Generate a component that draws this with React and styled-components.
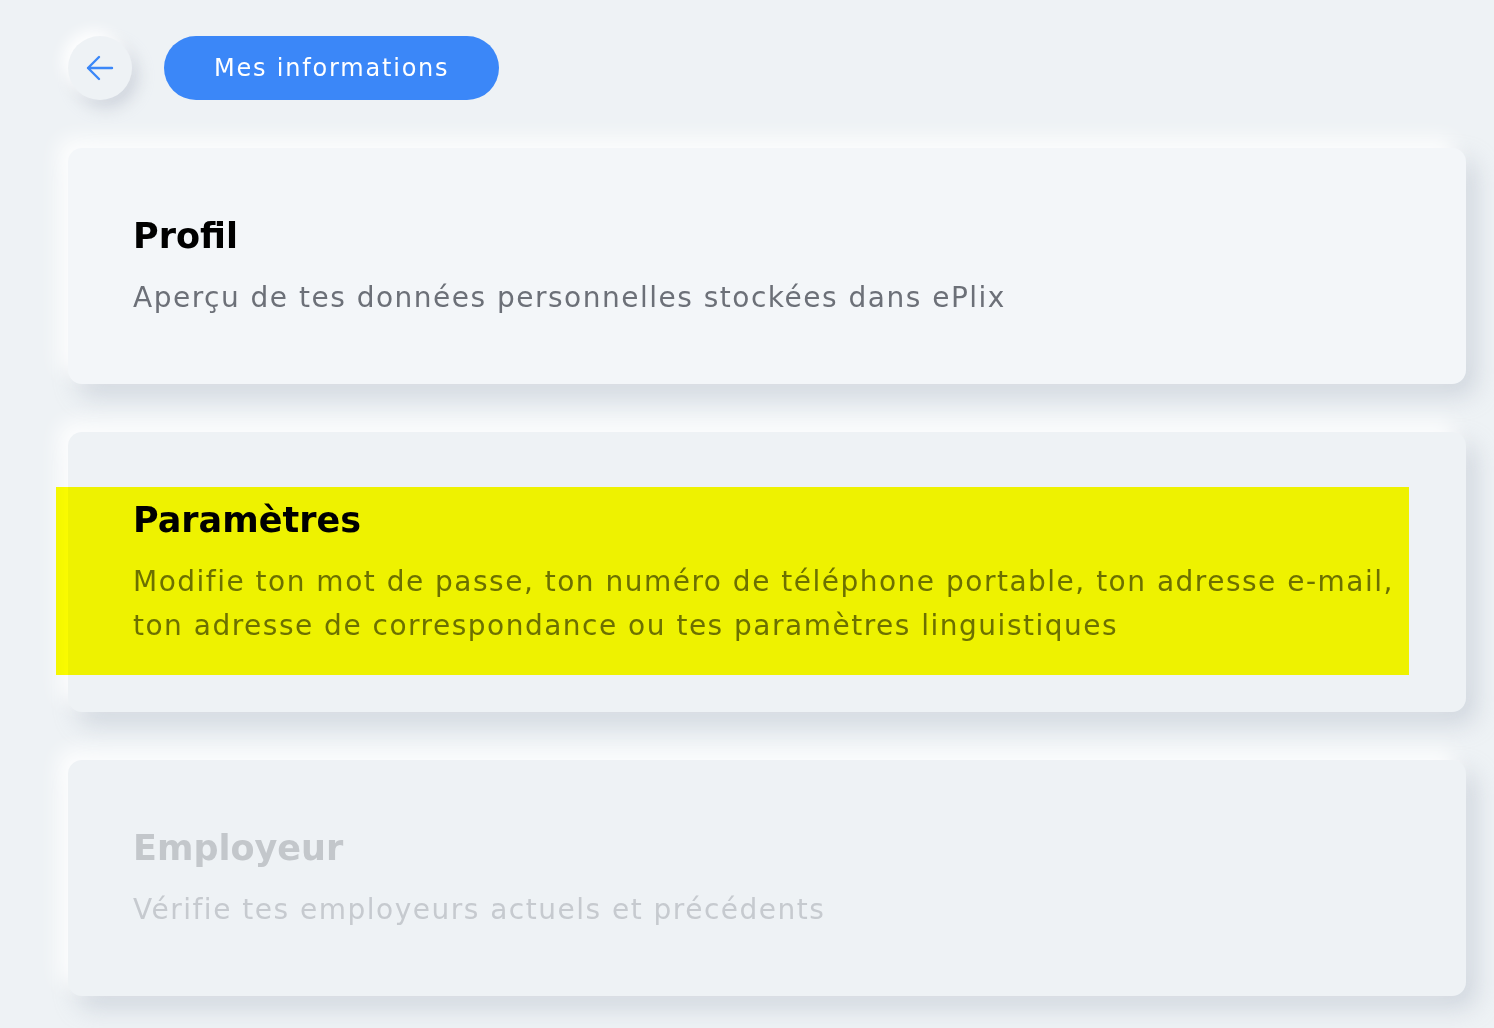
import React from 'react';
import styled, { createGlobalStyle } from 'styled-components';

const GlobalStyle = createGlobalStyle`
  html, body {
    margin: 0;
    padding: 0;
    background: #eef2f5;
  }
  body {
    font-family: 'DejaVu Sans', 'Liberation Sans', sans-serif;
    -webkit-font-smoothing: antialiased;
  }
`;

const Page = styled.div`
  min-height: 1028px;
  padding: 36px 28px 40px 68px;
  box-sizing: border-box;
  background: #eef2f5;
`;

const Header = styled.div`
  display: flex;
  align-items: center;
  gap: 32px;
  margin-bottom: 48px;
`;

const BackButton = styled.button`
  width: 64px;
  height: 64px;
  border-radius: 50%;
  border: none;
  padding: 0;
  display: flex;
  align-items: center;
  justify-content: center;
  background: #eef2f5;
  box-shadow: -6px -6px 14px rgba(255, 255, 255, 0.95),
    6px 8px 16px rgba(170, 178, 192, 0.45);
  cursor: pointer;
`;

const TitlePill = styled.div`
  height: 64px;
  padding: 0 50px;
  border-radius: 32px;
  background: #3b87f8;
  color: #ffffff;
  display: flex;
  align-items: center;
  font-size: 24px;
  letter-spacing: 1.8px;
`;

const CardList = styled.div`
  display: flex;
  flex-direction: column;
  gap: 48px;
`;

const Card = styled.div`
  position: relative;
  padding: 64px 65px;
  border-radius: 14px;
  background: ${(p) => (p.$active ? '#f3f6f9' : '#eef2f5')};
  box-shadow: -10px -10px 20px rgba(255, 255, 255, 0.9),
    10px 12px 24px rgba(168, 176, 190, 0.42);
`;

const CardTitle = styled.h2`
  margin: 0 0 18px;
  padding-top: 2px;
  font-size: 35px;
  line-height: 44px;
  font-weight: 700;
  color: ${(p) => (p.$disabled ? '#c3c7cb' : '#000000')};
`;

const CardText = styled.p`
  margin: 0;
  font-size: 28px;
  line-height: 44px;
  letter-spacing: 1.5px;
  color: ${(p) => (p.$disabled ? '#c6cacf' : '#6c7078')};
`;

const Highlight = styled.div`
  position: absolute;
  top: 55px;
  left: -12px;
  right: 57px;
  height: 188px;
  background: #ffff00;
  mix-blend-mode: multiply;
  pointer-events: none;
`;

const ArrowIcon = () => (
  <svg width="28" height="28" viewBox="0 0 28 28" fill="none">
    <path
      d="M26 14H2M13 3L2 14l11 11"
      stroke="#3b87f8"
      strokeWidth="2.4"
      strokeLinecap="round"
      strokeLinejoin="round"
    />
  </svg>
);

const sections = [
  {
    title: 'Profil',
    text: 'Aperçu de tes données personnelles stockées dans ePlix',
    active: true,
  },
  {
    title: 'Paramètres',
    text:
      'Modifie ton mot de passe, ton numéro de téléphone portable, ton adresse e-mail, ton adresse de correspondance ou tes paramètres linguistiques',
    highlight: true,
  },
  {
    title: 'Employeur',
    text: 'Vérifie tes employeurs actuels et précédents',
    disabled: true,
  },
];

export default function App() {
  return (
    <>
      <GlobalStyle />
      <Page>
        <Header>
          <BackButton aria-label="Retour">
            <ArrowIcon />
          </BackButton>
          <TitlePill>Mes informations</TitlePill>
        </Header>
        <CardList>
          {sections.map((s) => (
            <Card key={s.title} $active={s.active}>
              <CardTitle $disabled={s.disabled}>{s.title}</CardTitle>
              <CardText $disabled={s.disabled}>{s.text}</CardText>
              {s.highlight && <Highlight />}
            </Card>
          ))}
        </CardList>
      </Page>
    </>
  );
}
